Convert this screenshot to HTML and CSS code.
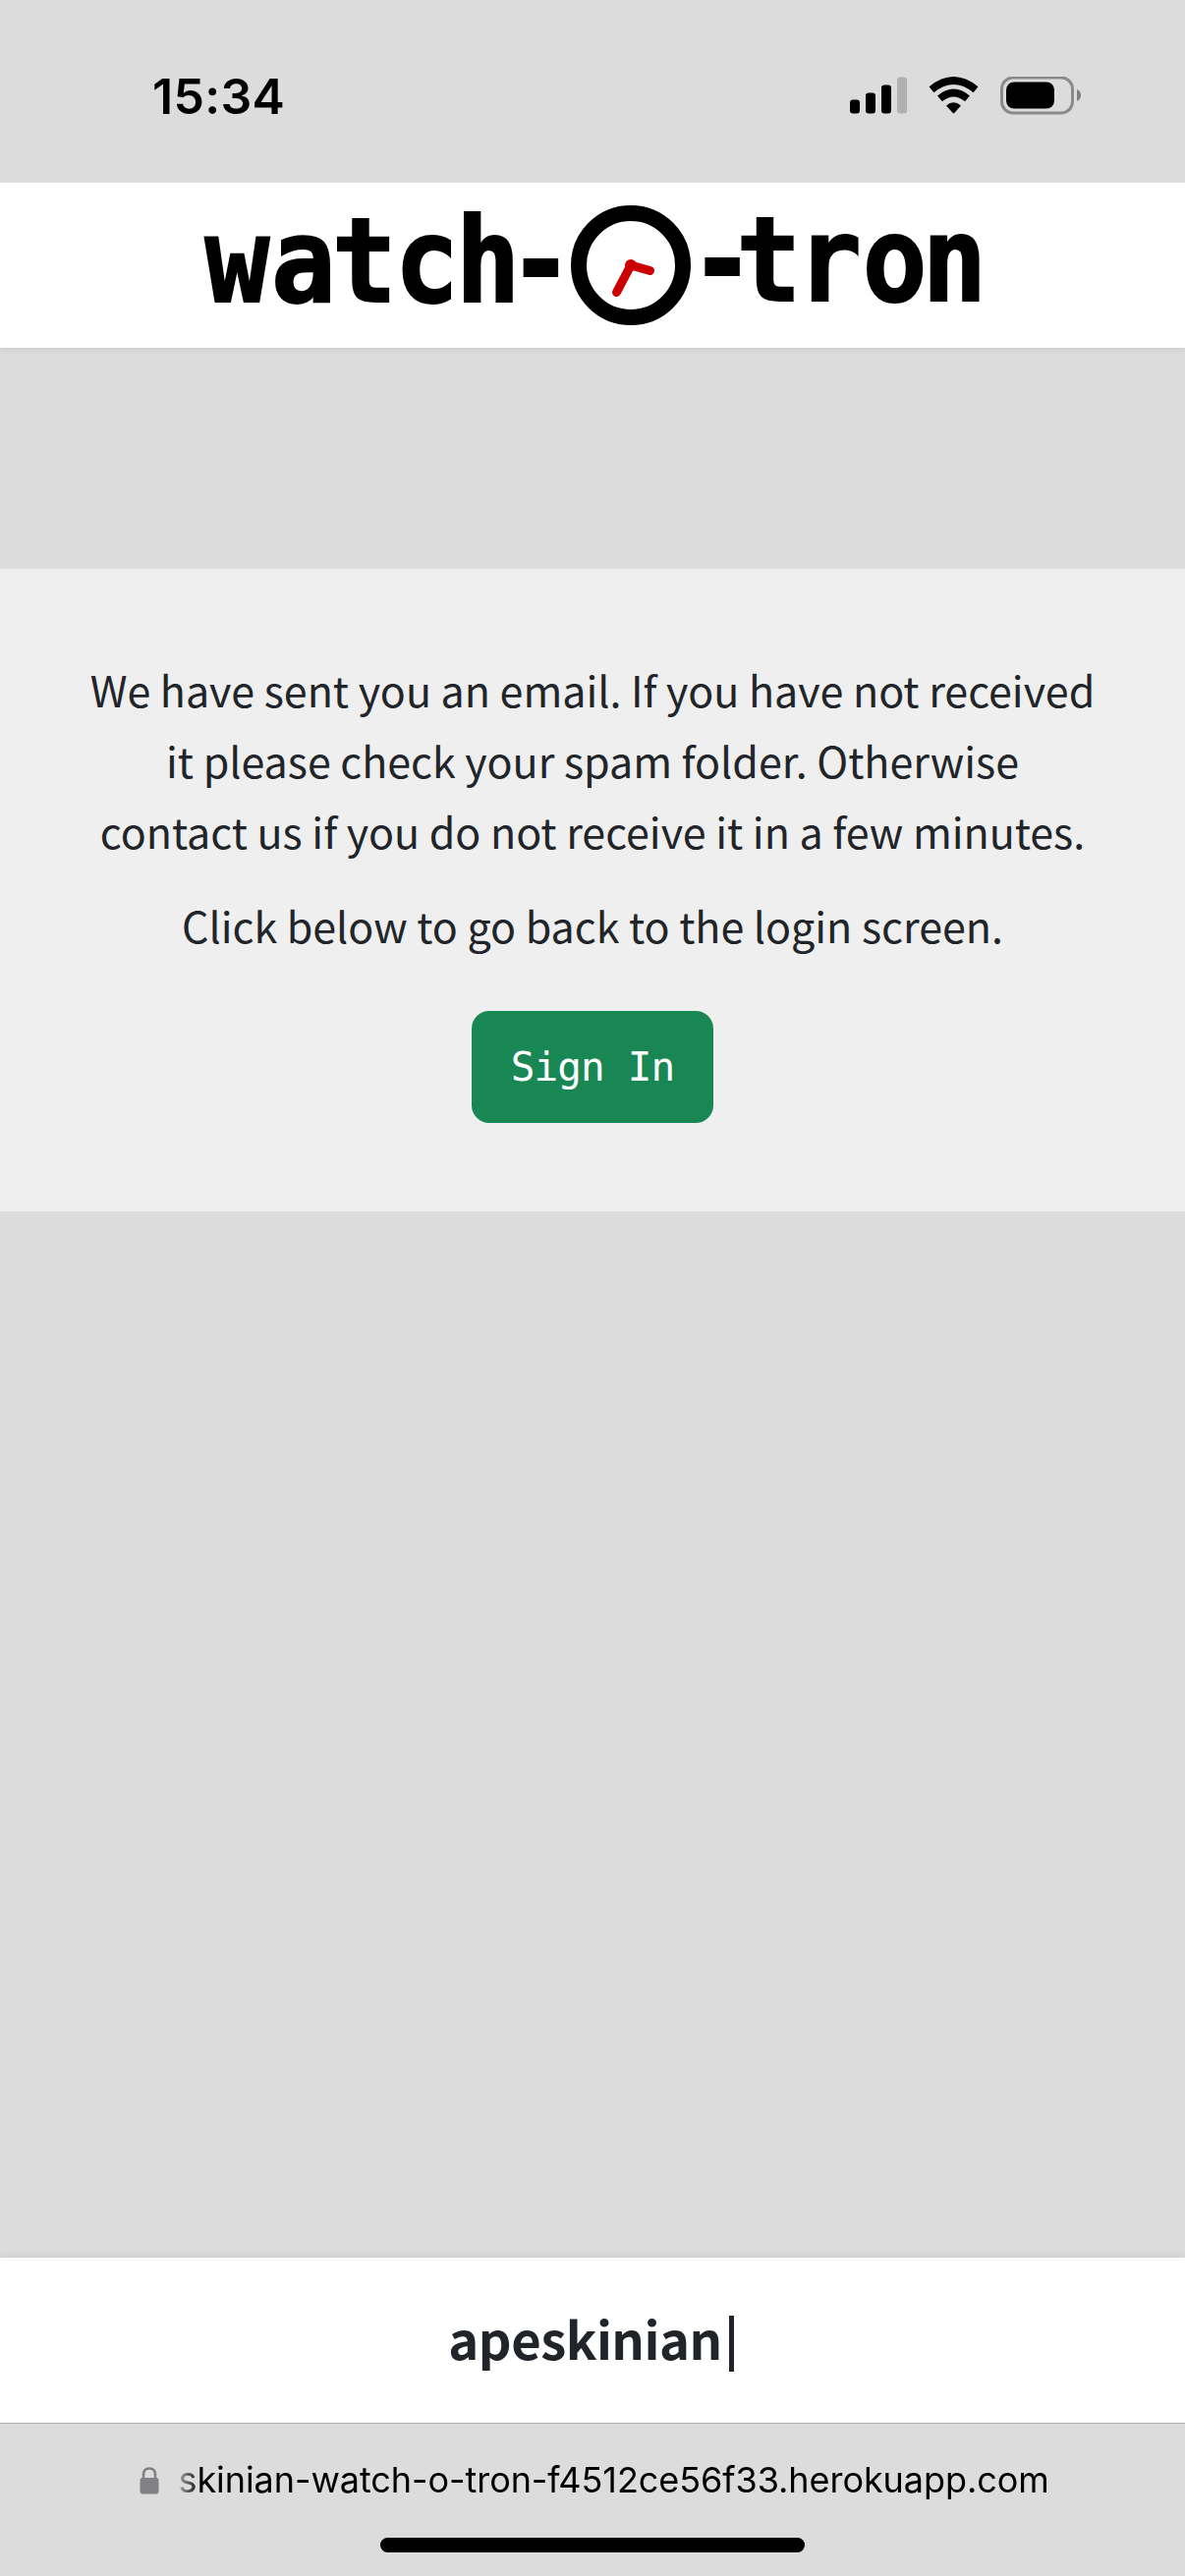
FILE: index.html
```html
<!DOCTYPE html>
<html lang="en">
<head>
<meta charset="utf-8">
<title>watch-o-tron</title>
<link rel="stylesheet" href="styles.css">
</head>
<body>
<div class="status">
  <span class="time">15:34</span>
  <svg class="indicators" width="236" height="40" viewBox="0 0 236 40">
    <rect x="0" y="23.5" width="10" height="14" rx="3"/>
    <rect x="16" y="16.5" width="10" height="21" rx="3"/>
    <rect x="32" y="8.5" width="10" height="29" rx="3"/>
    <rect x="48" y="0.5" width="10" height="37" rx="3" fill="#b0b0b0"/>
    <g fill="none" stroke="#000">
      <path d="M83 13.2Q105.500 -5.200 128 13.200" stroke-width="7.600"/>
      <path d="M91.500 22.300Q105.500 10.600 119.500 22.300" stroke-width="7.600"/>
    </g>
    <path d="M98 29.500Q105.500 22.800 113 29.500L106.500 36.800Q105.500 37.800 104.500 36.800Z"/>
    <rect x="154.500" y="1" width="72" height="36" rx="11.500" fill="none" stroke="#8a8a8a" stroke-width="3"/>
    <rect x="159" y="5.500" width="49" height="27" rx="8"/>
    <path d="M231 13Q235 14.500 235 19T231 25Z" fill="#808080"/>
  </svg>
</div>
<header class="header">
  <svg class="logo" width="1206" height="168" viewBox="0 186 1206 168">
    <g class="wordmark">
      <text transform="translate(0 307) scale(.91 1)" x="229.100 303.300 371.500 441.200 509.500 568.700">watch-</text>
      <text transform="translate(0 306) scale(.91 1)" x="771.600 823.600 891.500 964.500 1031.300">-tron</text>
    </g>
    <circle cx="642" cy="270" r="53" fill="none" stroke="#000" stroke-width="16"/>
    <path d="M627.500 297.500L642 270L661.500 275.500" fill="none" stroke="#c00" stroke-width="9" stroke-linecap="round"/>
    <circle cx="642" cy="270" r="6" fill="#c00"/>
  </svg>
</header>
<main class="main">
  <section class="card">
    <p>We have sent you an email. If you have not received<br>it please check your spam folder. Otherwise<br>contact us if you do not receive it in a few minutes.</p>
    <p>Click below to go back to the login screen.</p>
    <a class="btn">Sign In</a>
  </section>
</main>
<footer class="footer"><span class="name">apeskinian</span><span class="caret"></span></footer>
<div class="browser">
  <div class="address">
    <svg class="lock" width="20" height="28" viewBox="0 0 20 28">
      <path d="M4 13V8Q4 1.500 10 1.500T16 8V13" fill="none" stroke="#808085" stroke-width="2.600"/>
      <rect x="0.500" y="11" width="19" height="16.500" rx="3" fill="#808085"/>
    </svg>
    <span class="url">skinian-watch-o-tron-f4512ce56f33.herokuapp.com</span>
  </div>
  <div class="home"></div>
</div>
</body>
</html>
```
FILE: styles.css
```css
* { box-sizing: border-box; }
body {
  margin: 0;
  width: 1206px;
  height: 2622px;
  display: flex;
  flex-direction: column;
  background: #dcdcdc;
  color: #212529;
  font-family: "Noto Sans CJK SC", sans-serif;
  overflow: hidden;
}
p { margin: 0 0 24px; }
.status {
  height: 186px;
  flex: none;
  display: flex;
  justify-content: space-between;
  align-items: flex-start;
  padding: 68px 105px 0 155px;
  color: #000;
}
.time { font: 600 50px/60px Inter, sans-serif; letter-spacing: .3px; }
.indicators { margin-top: 10px; }
.header, .footer {
  height: 168px;
  flex: none;
  display: flex;
  align-items: center;
  justify-content: center;
  background: #fff;
}
.header { box-shadow: 0 3px 6px rgba(0, 0, 0, .06); }
.footer { padding-right: 3px; box-shadow: 0 -3px 6px rgba(0, 0, 0, .06); }
.logo { overflow: visible; }
.wordmark {
  font: bold 120px "DejaVu Sans Mono", monospace;
  stroke: #000;
  stroke-width: 2px;
}
.main { flex: 1; padding-top: 225px; }
.card {
  height: 654px;
  padding-top: 86px;
  background: #efefef;
  text-align: center;
  font-size: 43px;
  line-height: 72px;
  letter-spacing: -.02px;
}
.btn {
  display: block;
  width: 246px;
  height: 114px;
  margin: 52px auto 0;
  border-radius: 18px;
  background: #198754;
  color: #fff;
  font: 41px/115px "DejaVu Sans Mono", monospace;
  letter-spacing: -.9px;
}
.name {
  margin-top: -6px;
  font-size: 52.5px;
  font-weight: 700;
  line-height: 80px;
  letter-spacing: -.5px;
}
.caret {
  width: 5px;
  height: 57px;
  margin: 6px 0 0 7px;
  background: #212529;
}
.browser {
  height: 156px;
  flex: none;
  border-top: 1px solid #adadad;
  background: #dcdcdc;
  color: #000;
}
.address {
  height: 116px;
  display: flex;
  align-items: center;
  padding-left: 141.5px;
}
.url {
  margin: -2px 0 0 20px;
  font: 36px/50px Inter, sans-serif;
  letter-spacing: -.07px;
  white-space: nowrap;
  -webkit-mask-image: linear-gradient(90deg, rgba(0,0,0,.25), #000 22px);
  mask-image: linear-gradient(90deg, rgba(0,0,0,.25), #000 22px);
}
.home {
  width: 432px;
  height: 15px;
  margin: 0 auto;
  border-radius: 8px;
  background: #000;
}
```
